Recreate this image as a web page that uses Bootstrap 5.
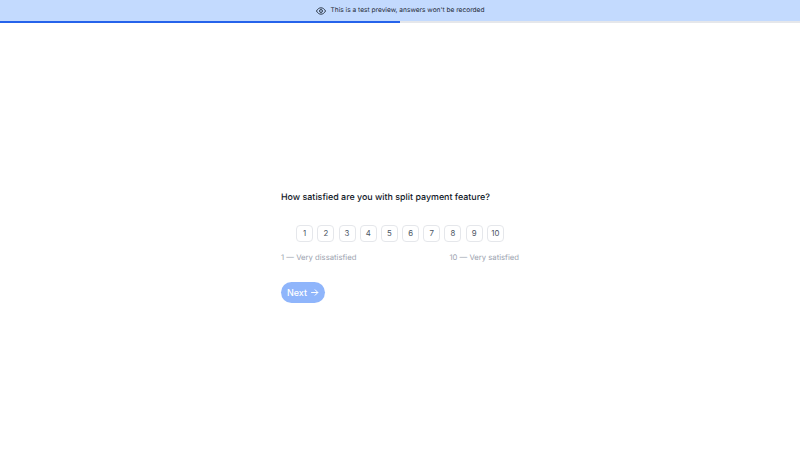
<!DOCTYPE html>
<html lang="en">
<head>
<meta charset="utf-8">
<title>Survey preview</title>
<link href="https://cdn.jsdelivr.net/npm/bootstrap@5.3.0/dist/css/bootstrap.min.css" rel="stylesheet">
<style>
html,body{height:100%;}
body{font-family:Inter,"Noto Sans",sans-serif;color:#111827;background:#fff;overflow:hidden;text-rendering:geometricPrecision;}
.preview-bar{height:21px;background:#c3dafe;font-size:6.6px;color:#1f2937;gap:5px;}
.track{height:2px;background:#e5e7eb;}
.track-fill{height:100%;background:#2563eb;}
.stage{height:447px;}
.survey{width:238px;}
.question{font-size:8.9px;font-weight:500;line-height:12px;margin:1px 0 21px;}
.scale{gap:4.2px;margin-bottom:10px;}
.scale-btn{width:17px;height:17px;padding:0;border:1px solid #e5e7eb;border-radius:4px;background:#fff;color:#4b5563;font-size:7.8px;line-height:15px;text-align:center;}
.scale-labels{font-size:7.7px;color:#9ca3af;line-height:12px;margin-bottom:18px;}
.next-btn{width:44px;height:21px;padding:1px 0 0;border:0;border-radius:11px;background:#8fb5fb;color:#fff;font-size:9px;font-weight:500;gap:3px;}
</style>
</head>
<body>
<div class="preview-bar d-flex align-items-center justify-content-center">
<svg width="10" height="8" viewBox="0 0 22 16" fill="none" stroke="#1f2937" stroke-width="2"><path d="M1 8c2.5-4.500 6-7 10-7s7.500 2.500 10 7c-2.500 4.500-6 7-10 7S3.500 12.500 1 8z"/><circle cx="11" cy="8" r="3.200"/></svg>
<span>This is a test preview, answers won't be recorded</span>
</div>
<div class="track"><div class="track-fill" style="width:50%"></div></div>
<main class="stage d-flex align-items-center justify-content-center">
<div class="survey">
<p class="question">How satisfied are you with split payment feature?</p>
<div class="scale d-flex justify-content-center">
<button class="scale-btn">1</button><button class="scale-btn">2</button><button class="scale-btn">3</button><button class="scale-btn">4</button><button class="scale-btn">5</button><button class="scale-btn">6</button><button class="scale-btn">7</button><button class="scale-btn">8</button><button class="scale-btn">9</button><button class="scale-btn">10</button>
</div>
<div class="scale-labels d-flex justify-content-between"><span>1 — Very dissatisfied</span><span>10 — Very satisfied</span></div>
<button class="next-btn d-flex align-items-center justify-content-center">Next <svg width="9" height="9" viewBox="0 0 12 12" fill="none" stroke="#fff" stroke-width="1.300"><path d="M1.500 6h9M6.500 2l4 4-4 4"/></svg></button>
</div>
</main>
<script src="https://cdn.jsdelivr.net/npm/bootstrap@5.3.0/dist/js/bootstrap.bundle.min.js"></script>
</body>
</html>
